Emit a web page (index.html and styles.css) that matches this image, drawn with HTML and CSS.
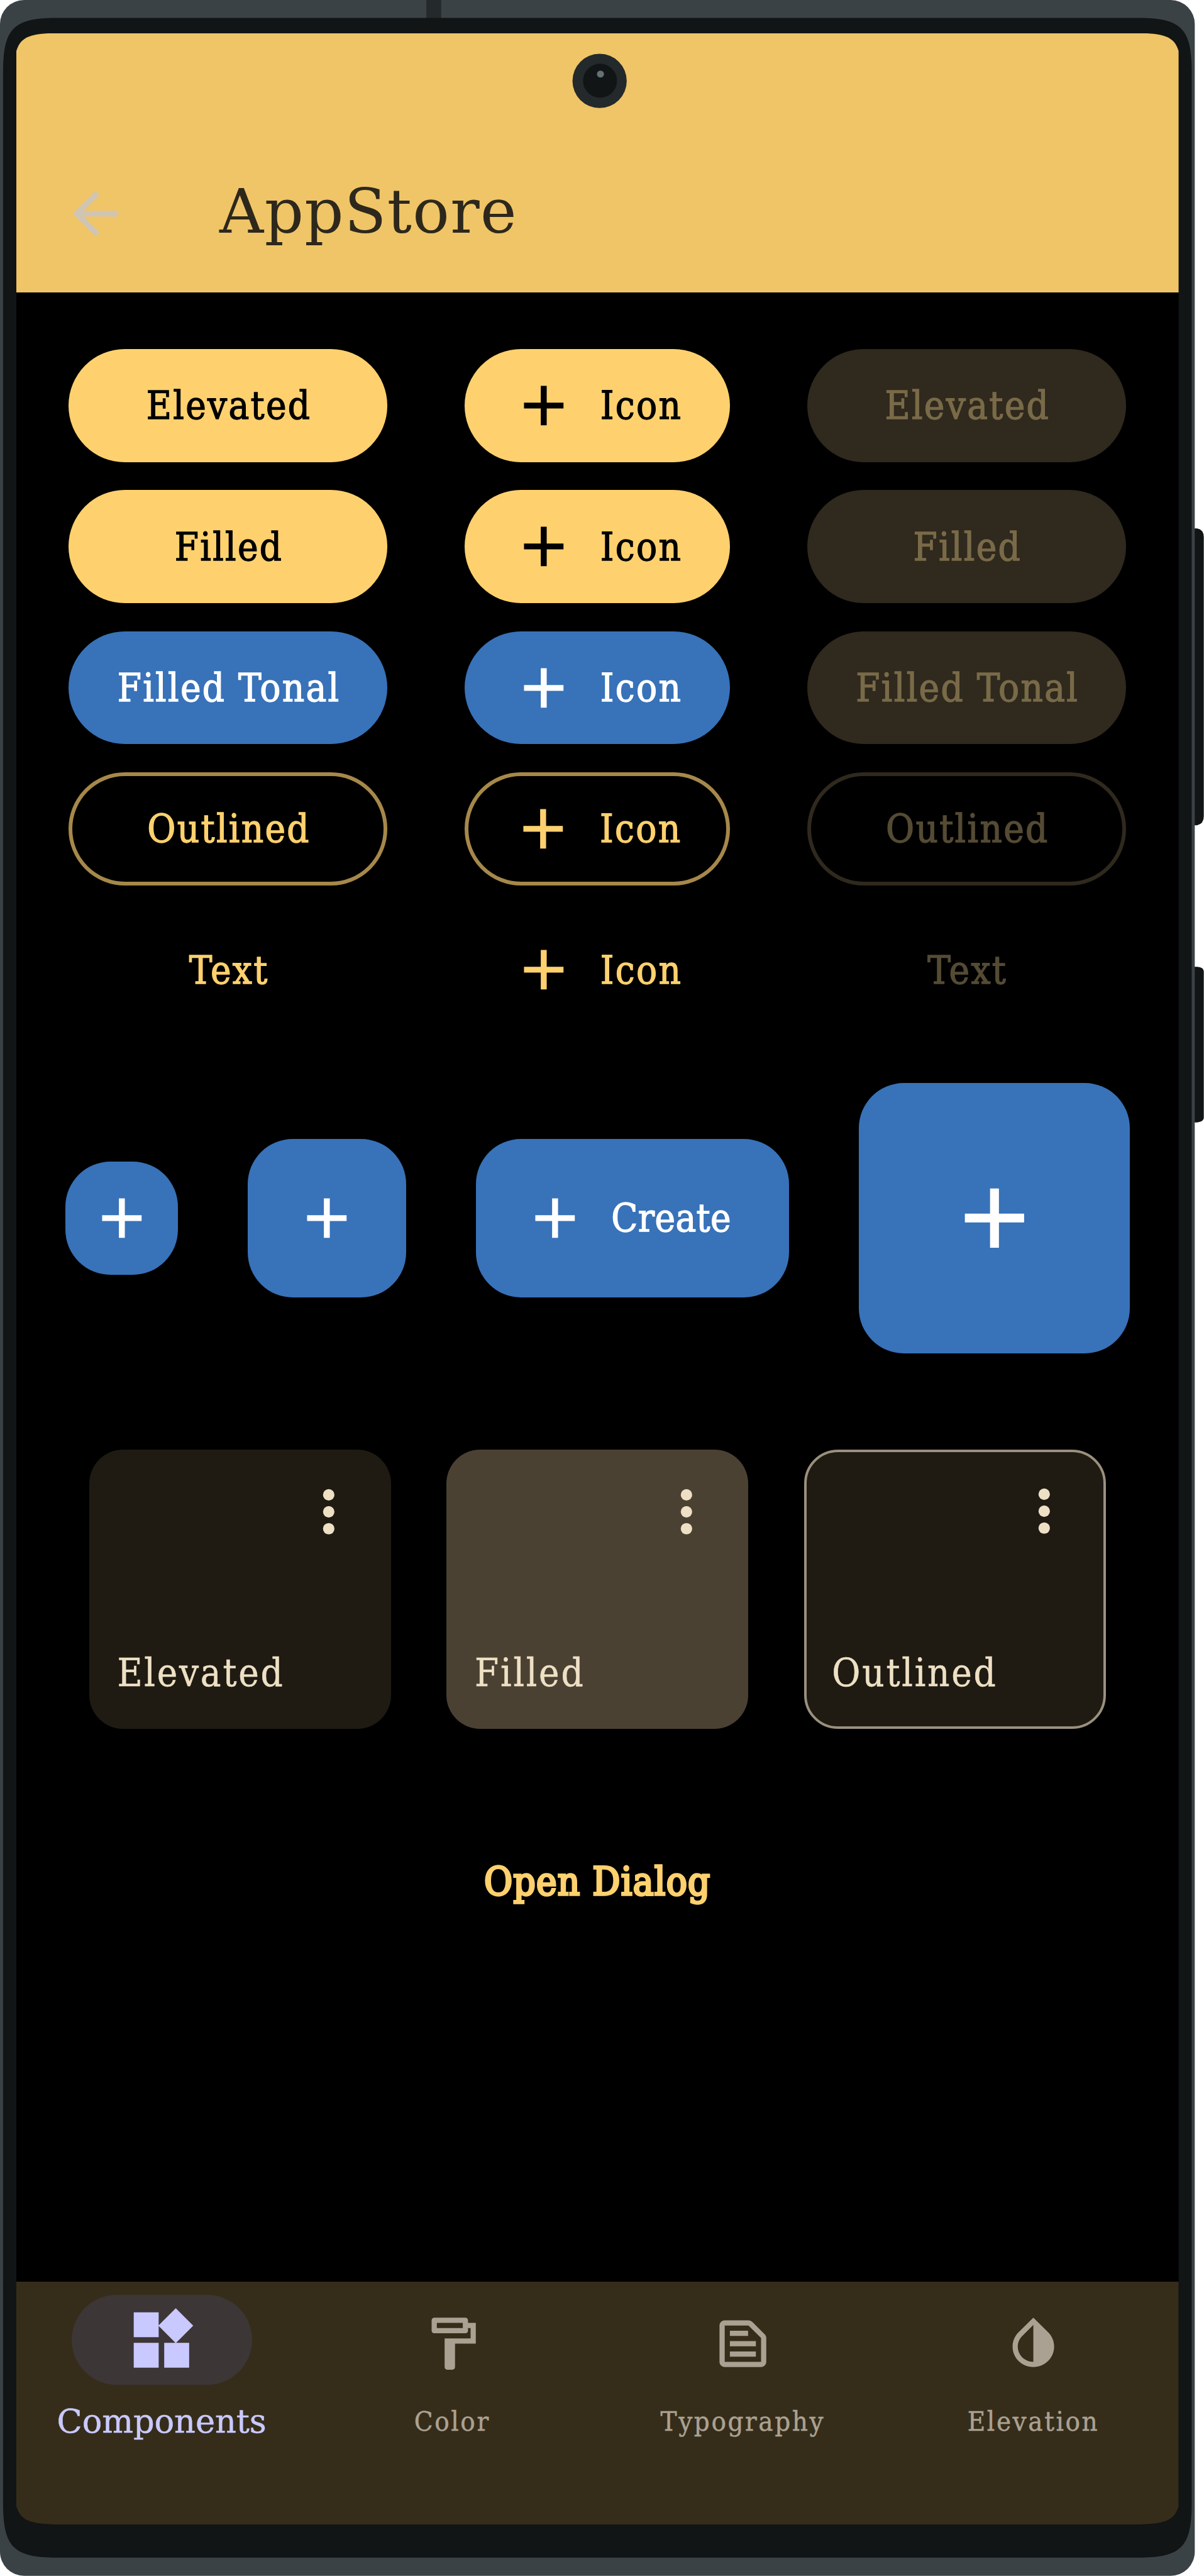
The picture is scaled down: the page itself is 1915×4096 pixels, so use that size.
FILE: index.html
```html
<!DOCTYPE html>
<html lang="en">
<head>
<meta charset="utf-8">
<title>AppStore</title>
<link rel="stylesheet" href="styles.css">
</head>
<body>
<svg class="defs" width="0" height="0" aria-hidden="true">
  <symbol id="plus" viewBox="0 0 24 24"><path d="M19 13.050h-5.950V19h-2.100v-5.950H5v-2.100h5.950V5h2.100v5.950H19z"/></symbol>
  <symbol id="more" viewBox="0 0 24 24"><circle cx="12" cy="6" r="2.030"/><circle cx="12" cy="12" r="2.030"/><circle cx="12" cy="18" r="2.030"/></symbol>
</svg>
<div class="phone">
  <svg class="frame" viewBox="0 0 2804 5999" preserveAspectRatio="none" aria-hidden="true">
    <path fill="#111516" d="M2770 1230.500h18q15.500 3 15.500 20v651q0 17-15.500 20.500h-18zM2770 2251.400h18q15.500 1.500 15.500 10v342q0 8.500-15.500 10.500h-18z"/>
    <rect width="2782.500" height="5998.500" rx="56" fill="#3b4245"/>
    <rect x="993" width="34.500" height="60" fill="#24292b"/>
    <path fill="#111516" d="M7.100 170C7.100 70 28 41.800 130 41.800H2652.500C2754.500 41.800 2775.400 70 2775.400 170V5828C2775.400 5928 2754.500 5956.100 2652.500 5956.100H130C28 5956.100 7.100 5928 7.100 5828Z"/>
  </svg>
  <div class="screen">
    <header class="appbar">
      <svg class="icon back" viewBox="0 0 24 24"><path d="M20 11H7.830l5.590-5.590L12 4l-8 8 8 8 1.410-1.410L7.830 13H20z"/></svg>
      <h1 class="title">AppStore</h1>
    </header>
    <main class="content">
      <section class="buttons">
        <div class="row">
          <button class="btn primary"><span>Elevated</span></button>
          <button class="btn primary with-icon"><svg class="icon"><use href="#plus"/></svg><span>Icon</span></button>
          <button class="btn disabled"><span>Elevated</span></button>
        </div>
        <div class="row">
          <button class="btn primary"><span>Filled</span></button>
          <button class="btn primary with-icon"><svg class="icon"><use href="#plus"/></svg><span>Icon</span></button>
          <button class="btn disabled"><span>Filled</span></button>
        </div>
        <div class="row">
          <button class="btn tonal"><span>Filled Tonal</span></button>
          <button class="btn tonal with-icon"><svg class="icon"><use href="#plus"/></svg><span>Icon</span></button>
          <button class="btn disabled"><span>Filled Tonal</span></button>
        </div>
        <div class="row">
          <button class="btn outlined"><span>Outlined</span></button>
          <button class="btn outlined with-icon"><svg class="icon"><use href="#plus"/></svg><span>Icon</span></button>
          <button class="btn outlined off"><span>Outlined</span></button>
        </div>
        <div class="row">
          <button class="btn text"><span>Text</span></button>
          <button class="btn text with-icon"><svg class="icon"><use href="#plus"/></svg><span>Icon</span></button>
          <button class="btn text off"><span>Text</span></button>
        </div>
      </section>
      <section class="fabs">
        <button class="fab small"><svg class="icon"><use href="#plus"/></svg></button>
        <button class="fab"><svg class="icon"><use href="#plus"/></svg></button>
        <button class="fab extended"><svg class="icon"><use href="#plus"/></svg><span>Create</span></button>
        <button class="fab large"><svg class="icon"><use href="#plus"/></svg></button>
      </section>
      <section class="cards">
        <article class="card"><svg class="icon"><use href="#more"/></svg><p>Elevated</p></article>
        <article class="card filled"><svg class="icon"><use href="#more"/></svg><p>Filled</p></article>
        <article class="card bordered"><svg class="icon"><use href="#more"/></svg><p>Outlined</p></article>
      </section>
      <button class="dialog"><span>Open Dialog</span></button>
    </main>
    <nav class="nav">
      <a class="tab active"><span class="pill"><svg viewBox="0 0 24 24"><path d="M12.900 12.900v8.100h8.100v-8.100zM3 21h8.100v-8.100H3zM3 3v8.100h8.100V3zm13.660-1.310L11 7.340 16.660 13l5.660-5.660z"/></svg></span><span class="label">Components</span></a>
      <a class="tab"><span class="pill"><svg viewBox="0 0 24 24"><path fill-rule="evenodd" d="M18 4V3c0-.550-.450-1-1-1H5c-.550 0-1 .450-1 1v4c0 .550.450 1 1 1h12c.550 0 1-.450 1-1V6h1v4H9v11c0 .550.450 1 1 1h2c.550 0 1-.450 1-1v-9h8V4zM6 4h10v2H6z"/></svg></span><span class="label">Color</span></a>
      <a class="tab"><span class="pill"><svg viewBox="0 0 24 24"><path fill-rule="evenodd" d="M14.170 5L19 9.830V19H5V5h9.170m0-2H5c-1.100 0-2 .900-2 2v14c0 1.100.900 2 2 2h14c1.100 0 2-.900 2-2V9.830c0-.530-.210-1.040-.590-1.410l-4.830-4.830c-.370-.380-.880-.590-1.410-.590zM7 15h10v2H7zm0-4h10v2H7zm0-4h7v2H7z"/></svg></span><span class="label">Typography</span></a>
      <a class="tab"><span class="pill"><svg viewBox="0 0 24 24"><path fill-rule="evenodd" d="M12 4.810V19c-3.310 0-6-2.630-6-5.870 0-1.560.620-3.030 1.750-4.140L12 4.810M12 2L6.350 7.560C4.900 8.990 4 10.960 4 13.130 4 17.480 7.580 21 12 21s8-3.520 8-7.870c0-2.170-.900-4.140-2.350-5.570z"/></svg></span><span class="label">Elevation</span></a>
    </nav>
  </div>
  <svg class="camera" viewBox="0 0 128 128" aria-hidden="true"><circle cx="64" cy="64" r="63.200" fill="#24292b"/><circle cx="65" cy="63.500" r="39.600" fill="#111516"/><circle cx="66" cy="48" r="8.200" fill="#667173"/></svg>
</div>
</body>
</html>
```
FILE: styles.css
```css
/* 1rem is one density-independent pixel of the device */
html {
  font-size: 4.487px;
}

* {
  box-sizing: border-box;
}

body {
  margin: 0;
  background: #fff;
  font-family: "DejaVu Serif Condensed", "DejaVu Serif", serif;
}

button {
  margin: 0;
  padding: 0;
  border: 0;
  background: none;
  font-family: inherit;
  color: inherit;
}

.defs {
  position: absolute;
}

.phone {
  position: relative;
  width: 1915px;
  height: 4096px;
  padding: 52.6px 0 0 26px;
  overflow: hidden;
}

.frame {
  position: absolute;
  left: 0;
  top: 0;
  width: 1915px;
  height: 4096px;
}

.camera {
  position: absolute;
  left: 909.9px;
  top: 85.3px;
  width: 87.4px;
  height: 87.4px;
}

.screen {
  position: relative;
  display: flex;
  flex-direction: column;
  width: 1848.6px;
  height: 3961.4px;
  background: #000;
  clip-path: path("M0 28.5C7 5.500 23 0 70 0H1778.600C1825.600 0 1841.600 5.500 1848.600 28.500V3932.900C1841.600 3955.900 1825.600 3961.400 1778.600 3961.400H70C23 3961.400 7 3955.900 0 3932.900Z");
}

.icon {
  flex: none;
  display: block;
  width: 24rem;
  height: 24rem;
  fill: currentColor;
}

.appbar {
  display: flex;
  align-items: center;
  height: 92rem;
  padding: 36rem 16rem 0;
  gap: 32rem;
  background: #efc567;
  color: #2e281c;
}

.back {
  color: #d0c5b4;
}

.title {
  margin: 0;
  padding-bottom: 6px;
  font-family: "DejaVu Serif", serif;
  font-size: 97.2px;
  font-weight: 400;
  line-height: 1;
  letter-spacing: 1.4px;
}

.content {
  flex: 1;
  display: flex;
  flex-direction: column;
  padding-top: 20rem;
}

.buttons {
  display: flex;
  flex-direction: column;
  gap: 10rem;
  padding: 0 18.6rem;
}

.row {
  display: flex;
  justify-content: space-between;
}

.btn {
  display: flex;
  align-items: center;
  justify-content: center;
  width: 113rem;
  height: 40rem;
  border-radius: 20rem;
  font-size: 61.2px;
  line-height: 1;
  letter-spacing: 2.3px;
  white-space: nowrap;
}

.btn span,
.fab span {
  margin-right: -2.3px;
  -webkit-text-stroke: 1.3px currentColor;
}

.with-icon {
  width: 94rem;
  justify-content: flex-start;
  padding-left: 16rem;
  gap: 8rem;
}

.primary {
  background: #ffd16e;
  color: #000;
}

.tonal {
  background: #3872b9;
  color: #fff;
}

.disabled {
  background: #2f291e;
  color: #796a48;
}

.outlined {
  border: 1.5rem solid #a6884a;
  color: #ffd16e;
}

.outlined.with-icon {
  padding-left: 14.5rem;
}

.text {
  color: #ffd16e;
}

.off {
  border-color: #2f291e;
  color: #554b34;
}

.fabs {
  display: flex;
  align-items: center;
  justify-content: space-between;
  margin-top: 20rem;
  padding: 0 17.35rem;
}

.fab {
  display: flex;
  align-items: center;
  justify-content: center;
  width: 56rem;
  height: 56rem;
  border-radius: 16rem;
  background: #3872b9;
  color: #fff;
  font-size: 61.2px;
  line-height: 1;
  letter-spacing: 0.4px;
}

.fab.small {
  width: 40rem;
  height: 40rem;
}

.fab.extended {
  width: 111rem;
  justify-content: flex-start;
  padding-left: 16rem;
  gap: 8rem;
}

.fab.large {
  width: 96rem;
  height: 96rem;
}

.large .icon {
  width: 36rem;
  height: 36rem;
}

.cards {
  display: flex;
  justify-content: space-between;
  margin-top: 34rem;
  padding: 0 25.75rem;
}

.card {
  display: flex;
  flex-direction: column;
  justify-content: space-between;
  width: 107rem;
  height: 99rem;
  padding: 10rem;
  border-radius: 12rem;
  background: #1f1b13;
  color: #eee0c4;
}

.card .icon {
  align-self: flex-end;
}

.card p {
  margin: 0;
  font-size: 61.2px;
  line-height: 20rem;
  letter-spacing: 2.75px;
  -webkit-text-stroke: 0.5px currentColor;
}

.filled {
  background: #4b4133;
}

.bordered {
  border: 1rem solid #9a907e;
  padding: 9rem;
}

.dialog {
  align-self: center;
  height: 40rem;
  margin-top: 34rem;
  color: #ffd16e;
  font-size: 61.2px;
  line-height: 1;
  letter-spacing: 1.3px;
  -webkit-text-stroke: 3.4px #ffd16e;
}

.nav {
  display: flex;
  height: 86rem;
  background: #352d1a;
  color: #aba192;
}

.tab {
  flex: 1;
  display: flex;
  flex-direction: column;
  align-items: center;
  padding-top: 4.57rem;
}

.pill {
  display: flex;
  align-items: center;
  justify-content: center;
  width: 64rem;
  height: 32rem;
  border-radius: 16rem;
}

.pill svg {
  width: 22.1rem;
  height: 22.1rem;
  margin-top: 2.8rem;
  fill: currentColor;
}

.label {
  margin-top: 5.9rem;
  font-size: 43.4px;
  line-height: 14rem;
  letter-spacing: 2.6px;
  -webkit-text-stroke: 0.5px currentColor;
}

.active {
  color: #c9c9ff;
}

.active .pill {
  background: #3d3636;
}

.active .pill svg {
  width: 26.2rem;
  height: 26.2rem;
  margin-top: 0;
}

.active .label {
  font-family: "DejaVu Serif", serif;
  font-size: 52.6px;
  letter-spacing: -0.1px;
}
```
